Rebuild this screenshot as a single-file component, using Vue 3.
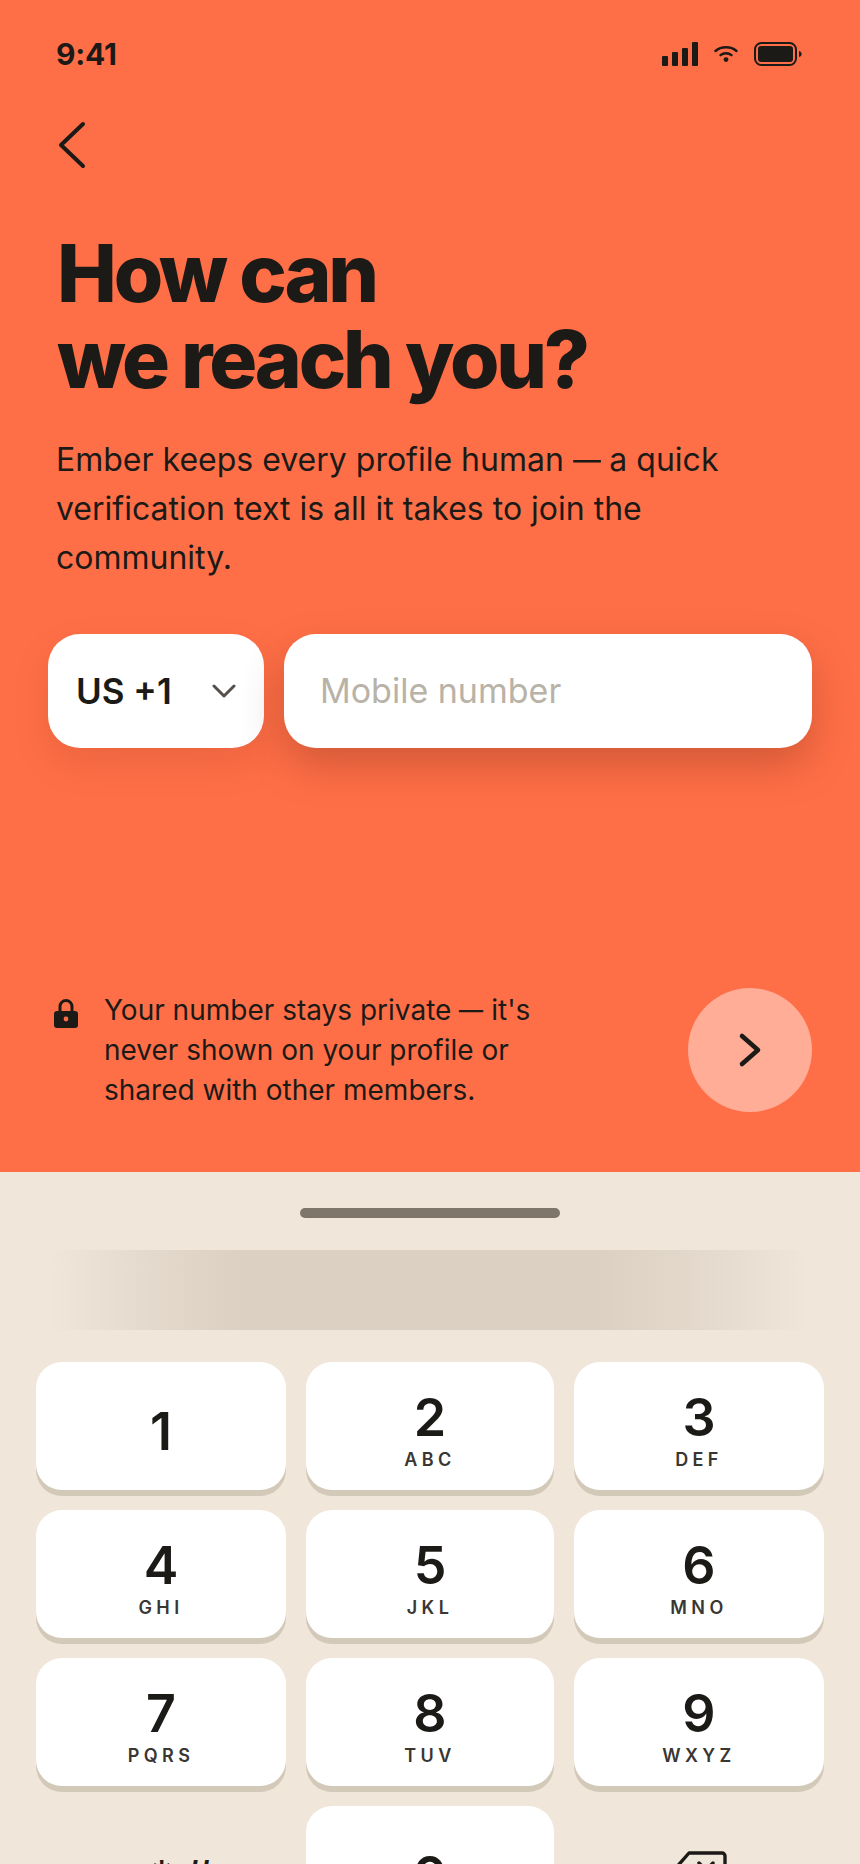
<script setup>
const keys = [
  { n: '1', l: '' },
  { n: '2', l: 'ABC' },
  { n: '3', l: 'DEF' },
  { n: '4', l: 'GHI' },
  { n: '5', l: 'JKL' },
  { n: '6', l: 'MNO' },
  { n: '7', l: 'PQRS' },
  { n: '8', l: 'TUV' },
  { n: '9', l: 'WXYZ' },
]
</script>

<template>
  <div class="screen">
    <section class="top">
      <div class="status">
        <span class="time">9:41</span>
        <div class="status-icons">
          <svg width="36" height="24" viewBox="0 0 36 24" fill="#1c1a17">
            <rect x="0" y="14" width="6" height="10" rx="1" />
            <rect x="10" y="10" width="6" height="14" rx="1" />
            <rect x="20" y="6" width="6" height="18" rx="1" />
            <rect x="30" y="0" width="6" height="24" rx="1" />
          </svg>
          <svg width="24" height="16" viewBox="0 0 24 16" fill="none" stroke="#1c1a17" stroke-width="2.4" stroke-linecap="round">
            <path d="M1.5 5C7 0 17 0 22.5 5" />
            <path d="M6.5 9.2C9.5 6.6 14.5 6.6 17.5 9.2" />
            <circle cx="12" cy="13.6" r="2.4" fill="#1c1a17" stroke="none" />
          </svg>
          <svg width="48" height="24" viewBox="0 0 48 24" fill="none">
            <rect x="1" y="1" width="41" height="22" rx="6.5" stroke="#1c1a17" stroke-width="2" />
            <rect x="4" y="4" width="35" height="16" rx="3" fill="#1c1a17" />
            <path d="M45 9C47 9.6 47.6 10.6 47.6 12C47.6 13.4 47 14.4 45 15Z" fill="#1c1a17" />
          </svg>
        </div>
      </div>

      <button class="back" type="button" aria-label="Back">
        <svg width="30" height="48" viewBox="0 0 30 48" fill="none" stroke="#1c1a17" stroke-width="4" stroke-linecap="round" stroke-linejoin="round">
          <path d="M25 3L3 24L25 45" />
        </svg>
      </button>

      <h1>How can<br />we reach you?</h1>
      <p class="lead">Ember keeps every profile human <span class="dash">—</span> a quick verification text is all it takes to join the community.</p>

      <div class="fields">
        <div class="country">
          <span>US +1</span>
          <svg width="24" height="14" viewBox="0 0 24 14" fill="none" stroke="#55504b" stroke-width="3" stroke-linecap="round" stroke-linejoin="round">
            <path d="M2 2L12 12L22 2" />
          </svg>
        </div>
        <div class="phone">Mobile number</div>
      </div>

      <div class="bottom">
        <svg class="lock" width="24" height="29" viewBox="0 0 24 29">
          <path d="M6 13V7.5a6 6 0 0 1 12 0V13" fill="none" stroke="#1c1a17" stroke-width="3" />
          <rect x="0" y="12" width="24" height="17" rx="3" fill="#1c1a17" />
          <circle cx="12" cy="20" r="2.4" fill="#ff6f47" />
        </svg>
        <p class="note">Your number stays private <span class="dash">—</span> it's never shown on your profile or shared with other members.</p>
        <button class="next" type="button" aria-label="Continue">
          <svg width="26" height="36" viewBox="0 0 26 36" fill="none" stroke="#1c1a17" stroke-width="4.6" stroke-linecap="round" stroke-linejoin="round">
            <path d="M5 4L21 18L5 32" />
          </svg>
        </button>
      </div>
    </section>

    <section class="pad">
      <div class="handle"></div>
      <div class="strip"></div>
      <div class="keys">
        <button v-for="k in keys" :key="k.n" class="key" :class="{ solo: !k.l }" type="button">
          <span class="num">{{ k.n }}</span>
          <span v-if="k.l" class="let">{{ k.l }}</span>
        </button>
        <div class="key flat sym">+ * #</div>
        <button class="key solo" type="button"><span class="num">0</span></button>
        <div class="key flat">
          <svg width="56" height="40" viewBox="0 0 56 40" fill="none" stroke="#1c1a17" stroke-width="3.4" stroke-linecap="round" stroke-linejoin="round">
            <path d="M18 3H51a3 3 0 0 1 3 3V34a3 3 0 0 1-3 3H18L3 20Z" />
            <path d="M28 13L42 27M42 13L28 27" />
          </svg>
        </div>
      </div>
    </section>
  </div>
</template>

<style scoped>
.screen {
  width: 860px;
  height: 1864px;
  overflow: hidden;
  display: flex;
  flex-direction: column;
  font-family: Inter, "Liberation Sans", sans-serif;
  color: #1c1a17;
}

.top {
  height: 1172px;
  flex-shrink: 0;
  background: #ff6f47;
  padding: 38px 48px 0;
  box-sizing: border-box;
  display: flex;
  flex-direction: column;
}

.status {
  display: flex;
  align-items: center;
  justify-content: space-between;
  padding: 0 10px 0 8px;
  height: 32px;
}

.time {
  font-size: 30px;
  font-weight: 700;
  letter-spacing: -0.2px;
}

.status-icons {
  display: flex;
  align-items: center;
  gap: 16px;
}

.back {
  background: none;
  border: 0;
  padding: 0;
  margin: 51px 0 0 10px;
  width: 30px;
  height: 48px;
}

h1 {
  margin: 61px 0 0 9px;
  font-size: 80px;
  line-height: 86.4px;
  font-weight: 800;
  letter-spacing: -3.2px;
}

.lead {
  margin: 32px 0 0 8px;
  font-size: 32px;
  line-height: 49px;
  width: 690px;
}

.dash {
  display: inline-block;
  transform: scaleX(0.87);
  margin: 0 -0.07em;
}

.fields {
  display: flex;
  gap: 20px;
  margin-top: 52px;
  height: 114px;
}

.country {
  width: 216px;
  background: #fff;
  border-radius: 32px;
  display: flex;
  align-items: center;
  justify-content: space-between;
  padding: 0 28px;
  box-sizing: border-box;
  font-size: 35px;
  font-weight: 600;
  box-shadow: 0 16px 36px rgba(110, 40, 20, 0.14);
}

.phone {
  flex: 1;
  background: #fff;
  border-radius: 32px;
  display: flex;
  align-items: center;
  padding: 0 36px;
  font-size: 34px;
  color: #b8b2a7;
  box-shadow: 0 18px 40px rgba(110, 40, 20, 0.3);
}

.bottom {
  display: flex;
  align-items: center;
  margin-top: auto;
  margin-bottom: 60px;
}

.lock {
  align-self: flex-start;
  margin: 11px 0 0 6px;
  flex-shrink: 0;
}

.note {
  margin: 0 0 0 26px;
  font-size: 28px;
  line-height: 40px;
  width: 470px;
}

.next {
  margin-left: auto;
  width: 124px;
  height: 124px;
  border-radius: 50%;
  border: 0;
  padding: 0;
  background: #ffad96;
  display: flex;
  align-items: center;
  justify-content: center;
}

.pad {
  flex: 1;
  background: #f0e6da;
  padding: 36px 36px 0;
  display: flex;
  flex-direction: column;
  align-items: center;
}

.handle {
  width: 260px;
  height: 10px;
  border-radius: 5px;
  background: #7e766a;
}

.strip {
  align-self: stretch;
  margin: 32px 14px 0;
  height: 80px;
  background: linear-gradient(90deg, rgba(219, 208, 194, 0), rgba(219, 208, 194, 0.45) 10%, #dbd0c2 25%, #dbd0c2 72%, rgba(219, 208, 194, 0.5) 88%, rgba(219, 208, 194, 0));
}

.keys {
  align-self: stretch;
  margin-top: 32px;
  display: grid;
  grid-template-columns: 250px 248px 250px;
  column-gap: 20px;
  row-gap: 20px;
  grid-auto-rows: 128px;
}

.key {
  border: 0;
  padding: 6px 0 0;
  background: #fff;
  border-radius: 26px;
  box-shadow: 0 6px 0 #d2c9b9;
  display: flex;
  flex-direction: column;
  align-items: center;
  justify-content: center;
  font-family: inherit;
  color: #1c1a17;
}

.key.solo {
  padding-top: 12px;
}

.key.flat {
  background: none;
  box-shadow: none;
  padding-top: 0;
}

.key.sym {
  font-size: 44px;
  font-weight: 500;
  padding-top: 12px;
}

.num {
  font-size: 52px;
  line-height: 60px;
  font-weight: 570;
}

.let {
  font-size: 18px;
  line-height: 22px;
  margin-top: 1px;
  font-weight: 600;
  letter-spacing: 4.4px;
  color: #3a3632;
}
</style>
